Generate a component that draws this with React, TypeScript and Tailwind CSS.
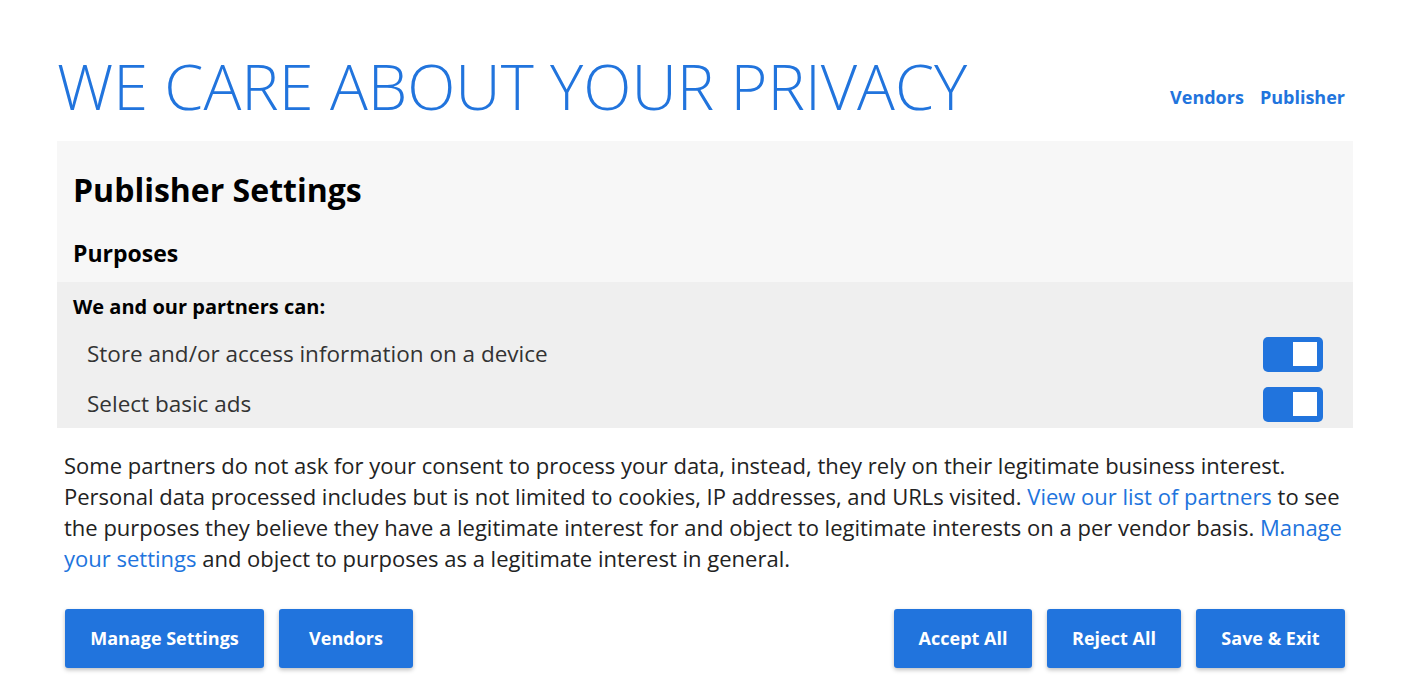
import React from 'react';

const blue = 'bg-[#2174dd]';

const Toggle: React.FC = () => (
  <div className={`${blue} w-[60px] h-[35px] rounded-[5px] flex items-center justify-end pr-[6px]`}>
    <div className="w-[24px] h-[24px] bg-white" />
  </div>
);

const Purpose: React.FC<{ label: string }> = ({ label }) => (
  <div className="flex items-center justify-between h-[50px] pl-[30px] pr-[30px]">
    <span className="text-[22.5px] text-[#333]">{label}</span>
    <Toggle />
  </div>
);

const Btn: React.FC<{ label: string; w: string }> = ({ label, w }) => (
  <button
    className={`${blue} ${w} h-[59px] rounded-[3px] text-white text-[18px] font-bold shadow-[0_2px_4px_rgba(0,0,0,0.25)]`}
  >
    {label}
  </button>
);

export default function App() {
  return (
    <div
      className="bg-white min-h-[695px] pl-[57px] w-[1353px]"
      style={{ fontFamily: '"Open Sans", "Liberation Sans", sans-serif' }}
    >
      <div className="flex items-end justify-between pt-[48px] pr-[8px]">
        <h1 className="text-[63px] font-light text-[#2174dd] leading-[76px]">
          WE CARE ABOUT YOUR PRIVACY
        </h1>
        <div className="flex gap-[16px] pb-[13px] text-[18px] font-bold text-[#2174dd]">
          <a>Vendors</a>
          <a>Publisher</a>
        </div>
      </div>

      <div className="mt-[17px]">
        <div className="bg-[#f7f7f7] px-[16px] pt-[28px] h-[141px]">
          <h2 className="text-[32px] font-bold text-black leading-[42px]">Publisher Settings</h2>
          <h3 className="text-[23px] font-bold text-black mt-[26px] leading-[32px]">Purposes</h3>
        </div>
        <div className="bg-[#efefef] h-[146px] pt-[12px]">
          <div className="px-[16px] text-[20px] font-bold text-black leading-[26px] pb-[9px]">
            We and our partners can:
          </div>
          <Purpose label="Store and/or access information on a device" />
          <Purpose label="Select basic ads" />
        </div>
      </div>

      <p className="px-[7px] pt-[22px] text-[22px] leading-[31px] text-[#222]">
        Some partners do not ask for your consent to process your data, instead, they rely on their legitimate business interest. Personal data processed includes but is not limited to cookies, IP addresses, and URLs visited.{' '}
        <a className="text-[#2174dd]">View our list of partners</a> to see the purposes they believe they have a legitimate interest for and object to legitimate interests on a per vendor basis.{' '}
        <a className="text-[#2174dd]">Manage your settings</a> and object to purposes as a legitimate interest in general.
      </p>

      <div className="flex justify-between pl-[8px] pr-[8px] mt-[35px]">
        <div className="flex gap-[15px]">
          <Btn label="Manage Settings" w="w-[199px]" />
          <Btn label="Vendors" w="w-[134px]" />
        </div>
        <div className="flex gap-[15px]">
          <Btn label="Accept All" w="w-[138px]" />
          <Btn label="Reject All" w="w-[134px]" />
          <Btn label="Save & Exit" w="w-[149px]" />
        </div>
      </div>
    </div>
  );
}
